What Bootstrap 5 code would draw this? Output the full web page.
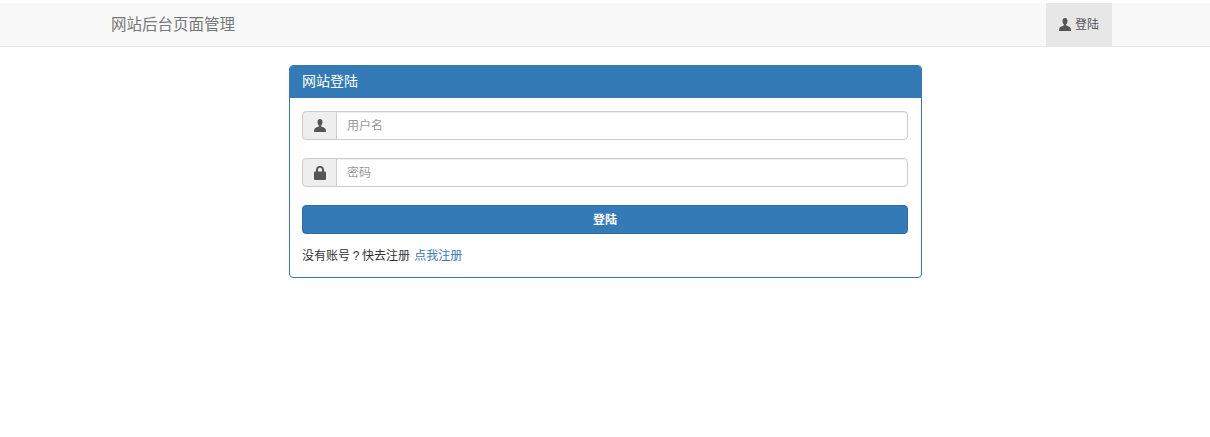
<!DOCTYPE html>
<html lang="zh-CN">
<head>
  <meta charset="UTF-8" />
  <meta name="viewport" content="width=device-width, initial-scale=1.0"/>
  <title>网站登陆</title>
  <link rel="stylesheet" href="https://cdn.jsdelivr.net/npm/bootstrap@5.3.0/dist/css/bootstrap.min.css" />
  <script src="https://cdn.jsdelivr.net/npm/bootstrap@5.3.3/dist/js/bootstrap.bundle.min.js"></script>
  <style>
    body {
      font-family: "Liberation Sans", "Noto Sans CJK SC", sans-serif;
      font-size: 12px;
      color: #333;
      background: #fff;
      padding-top: 3px;
    }
    .top-bar {
      height: 44px;
      padding: 0;
      background: #f8f8f8;
      border-bottom: 1px solid #e7e7e7;
    }
    .top-inner {
      width: 1001px;
      margin-left: 111px;
      height: 100%;
    }
    .top-brand {
      font-size: 15.5px;
      color: #777;
      text-decoration: none;
    }
    .top-login {
      width: 66px;
      height: 100%;
      background: #e7e7e7;
      color: #555;
      font-size: 12px;
      text-decoration: none;
    }
    .login-box {
      width: 633px;
      margin: 18px 0 0 289px;
      border: 1px solid #337ab7;
      border-radius: 4px;
      background: #fff;
    }
    .login-head {
      height: 32px;
      background: #337ab7;
      color: #fff;
      font-size: 14px;
      padding-left: 12px;
      line-height: 30px;
      border-radius: 3px 3px 0 0;
    }
    .login-body {
      padding: 13px 13px 13px 12px;
    }
    .login-field {
      height: 29px;
      margin-bottom: 18px;
    }
    .login-field .input-group-text {
      width: 35px;
      padding: 0;
      justify-content: center;
      background: #eee;
      border-color: #ccc;
      border-radius: 4px 0 0 4px;
    }
    .login-field .form-control {
      font-size: 12px;
      padding: 0 10px;
      border-color: #ccc;
      border-radius: 0 4px 4px 0;
      box-shadow: inset 0 1px 1px rgba(0, 0, 0, .075);
    }
    .login-field .form-control::placeholder {
      color: #999;
    }
    .login-btn {
      height: 29px;
      padding: 0;
      font-size: 12px;
      font-weight: 700;
      color: #fff;
      background: #337ab7;
      border: 1px solid #2e6da4;
      border-radius: 4px;
    }
    .login-note {
      margin: 15px 0 0;
      line-height: 15px;
      color: #333;
    }
    .login-note a {
      color: #337ab7;
      text-decoration: none;
      margin-left: 1px;
    }
    .note-mark {
      width: 12px;
      text-align: center;
    }
  </style>
</head>
<body>
  <nav class="top-bar">
    <div class="top-inner d-flex align-items-center justify-content-between">
      <a class="top-brand" href="#">网站后台页面管理</a>
      <a class="top-login d-flex align-items-center justify-content-center gap-1" href="#">
        <svg width="12" height="13" viewBox="0 0 12 13" fill="#555"><path d="M6 0C4.400 0 3.500 1.200 3.500 3c0 1.400.5 2.600 1.300 3.300v1.300C3.400 8.300.8 8.800.3 10.200L0 13h12l-.3-2.800C11.200 8.800 8.600 8.300 7.200 7.600V6.300C8 5.600 8.500 4.400 8.500 3 8.500 1.200 7.600 0 6 0z"/></svg>
        <span>登陆</span>
      </a>
    </div>
  </nav>

  <div class="login-box">
    <div class="login-head">网站登陆</div>
    <form class="login-body">
      <div class="input-group login-field">
        <span class="input-group-text">
          <svg width="12" height="13" viewBox="0 0 12 13" fill="#555"><path d="M6 0C4.400 0 3.500 1.200 3.500 3c0 1.400.5 2.600 1.300 3.300v1.300C3.400 8.300.8 8.800.3 10.200L0 13h12l-.3-2.800C11.200 8.800 8.600 8.300 7.200 7.600V6.300C8 5.600 8.500 4.400 8.500 3 8.500 1.200 7.600 0 6 0z"/></svg>
        </span>
        <input class="form-control" type="text" placeholder="用户名">
      </div>
      <div class="input-group login-field">
        <span class="input-group-text">
          <svg width="12" height="14" viewBox="0 0 12 14" fill="#555"><path d="M2 6V4c0-2.400 1.600-4 4-4s4 1.600 4 4v2H8V4c0-1.300-.8-2.200-2-2.200S4 2.700 4 4v2z"/><rect x="0" y="5.500" width="12" height="8.500" rx=".8"/></svg>
        </span>
        <input class="form-control" type="password" placeholder="密码">
      </div>
      <button class="btn login-btn w-100" type="button">登陆</button>
      <p class="login-note">没有账号<span class="note-mark d-inline-block">?</span>快去注册 <a href="#">点我注册</a></p>
    </form>
  </div>
</body>
</html>
